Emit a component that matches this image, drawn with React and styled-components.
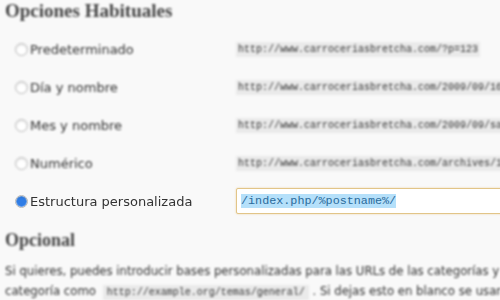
import React from 'react'
import styled, { createGlobalStyle } from 'styled-components'

const GlobalStyle = createGlobalStyle`
  html, body {
    margin: 0;
    padding: 0;
    background: #f9f9f9;
    overflow: hidden;
  }
`;

const rows = [
  { label: 'Predeterminado', url: 'http://www.carroceriasbretcha.com/?p=123', blur: 1.3 },
  { label: 'Día y nombre', url: 'http://www.carroceriasbretcha.com/2009/09/16/sample-post/', blur: 1.1 },
  { label: 'Mes y nombre', url: 'http://www.carroceriasbretcha.com/2009/09/sample-post/', blur: 1 },
  { label: 'Numérico', url: 'http://www.carroceriasbretcha.com/archives/123', blur: 0.8 },
];

function App() {
  return (
    <Page>
      <GlobalStyle />
      <Heading $blur={1.3}>Opciones Habituales</Heading>
      <Options>
        {rows.map((r) => (
          <Row key={r.label}>
            <Label $blur={r.blur}>
              <Radio />
              {r.label}
            </Label>
            <Sample $blur={r.blur}>
              <Code>{r.url}</Code>
            </Sample>
          </Row>
        ))}
        <Row>
          <Label $blur={0.6}>
            <Radio $checked />
            Estructura personalizada
          </Label>
          <Sample>
            <Input>
              <Selected>/index.php/%postname%/</Selected>
            </Input>
          </Sample>
        </Row>
      </Options>
      <SubHeading $blur={0.9}>Opcional</SubHeading>
      <Text $blur={1.1}>
        Si quieres, puedes introducir bases personalizadas para las URLs de las categorías y etiquetas. Por ejemplo, usando temas como base de tu
        <br />
        categoría como <InlineCode>http://example.org/temas/general/</InlineCode> . Si dejas esto en blanco se usarán los predeterminados.
      </Text>
    </Page>
  );
}

export default App;

const Page = styled.div`
  width: 900px;
  padding: 0 0 0 5px;
  font-family: "DejaVu Sans", Verdana, sans-serif;
  color: #333;
`;

const Heading = styled.h3`
  margin: 0;
  font-family: "Liberation Serif", Georgia, serif;
  font-size: 19px;
  line-height: 22px;
  font-weight: bold;
  color: #464646;
  filter: blur(${(p) => p.$blur}px);
`;

const SubHeading = styled(Heading)`
  margin-top: 10px;
  font-size: 18px;
  line-height: 20px;
`;

const Options = styled.div`
  margin-top: 8px;
  display: flex;
  flex-direction: column;
`;

const Row = styled.div`
  display: grid;
  grid-template-columns: 231px 1fr;
  align-items: center;
  height: 38px;
`;

const Label = styled.label`
  display: flex;
  align-items: center;
  padding-left: 10px;
  font-size: 13px;
  color: #333;
  filter: blur(${(p) => p.$blur}px);
`;

const Radio = styled.span`
  width: 11px;
  height: 11px;
  margin-right: 2px;
  border-radius: 50%;
  border: 1px solid #b8b8b8;
  background: ${(p) => (p.$checked ? 'radial-gradient(circle, #2f7de6 0 4px, #6aa3ee 5px, #fff 6px)' : '#fff')};
  box-shadow: inset 0 1px 2px rgba(0, 0, 0, 0.15);
`;

const Sample = styled.div`
  display: flex;
  align-items: center;
  filter: ${(p) => (p.$blur ? `blur(${p.$blur}px)` : 'none')};
`;

const Code = styled.code`
  font-family: "Liberation Mono", "DejaVu Sans Mono", monospace;
  font-size: 10px;
  background: #eaeaea;
  color: #333;
  padding: 2px 2px;
`;

const InlineCode = styled(Code)`
  margin-left: 3px;
  padding: 2px 4px;
`;

const Input = styled.div`
  width: 500px;
  height: 24px;
  display: flex;
  align-items: center;
  padding: 0 4px;
  background: #fff;
  border: 1px solid #e2c588;
  border-radius: 2px;
  box-shadow: 0 0 2px rgba(225, 180, 100, 0.6);
`;

const Selected = styled.span`
  font-family: "Liberation Mono", "DejaVu Sans Mono", monospace;
  font-size: 11.75px;
  color: #2a6b9c;
  background: #b5e0fa;
`;

const Text = styled.p`
  margin: 11px 0 0;
  font-size: 11.7px;
  line-height: 20px;
  color: #333;
  white-space: nowrap;
  filter: blur(${(p) => p.$blur}px);
`;
